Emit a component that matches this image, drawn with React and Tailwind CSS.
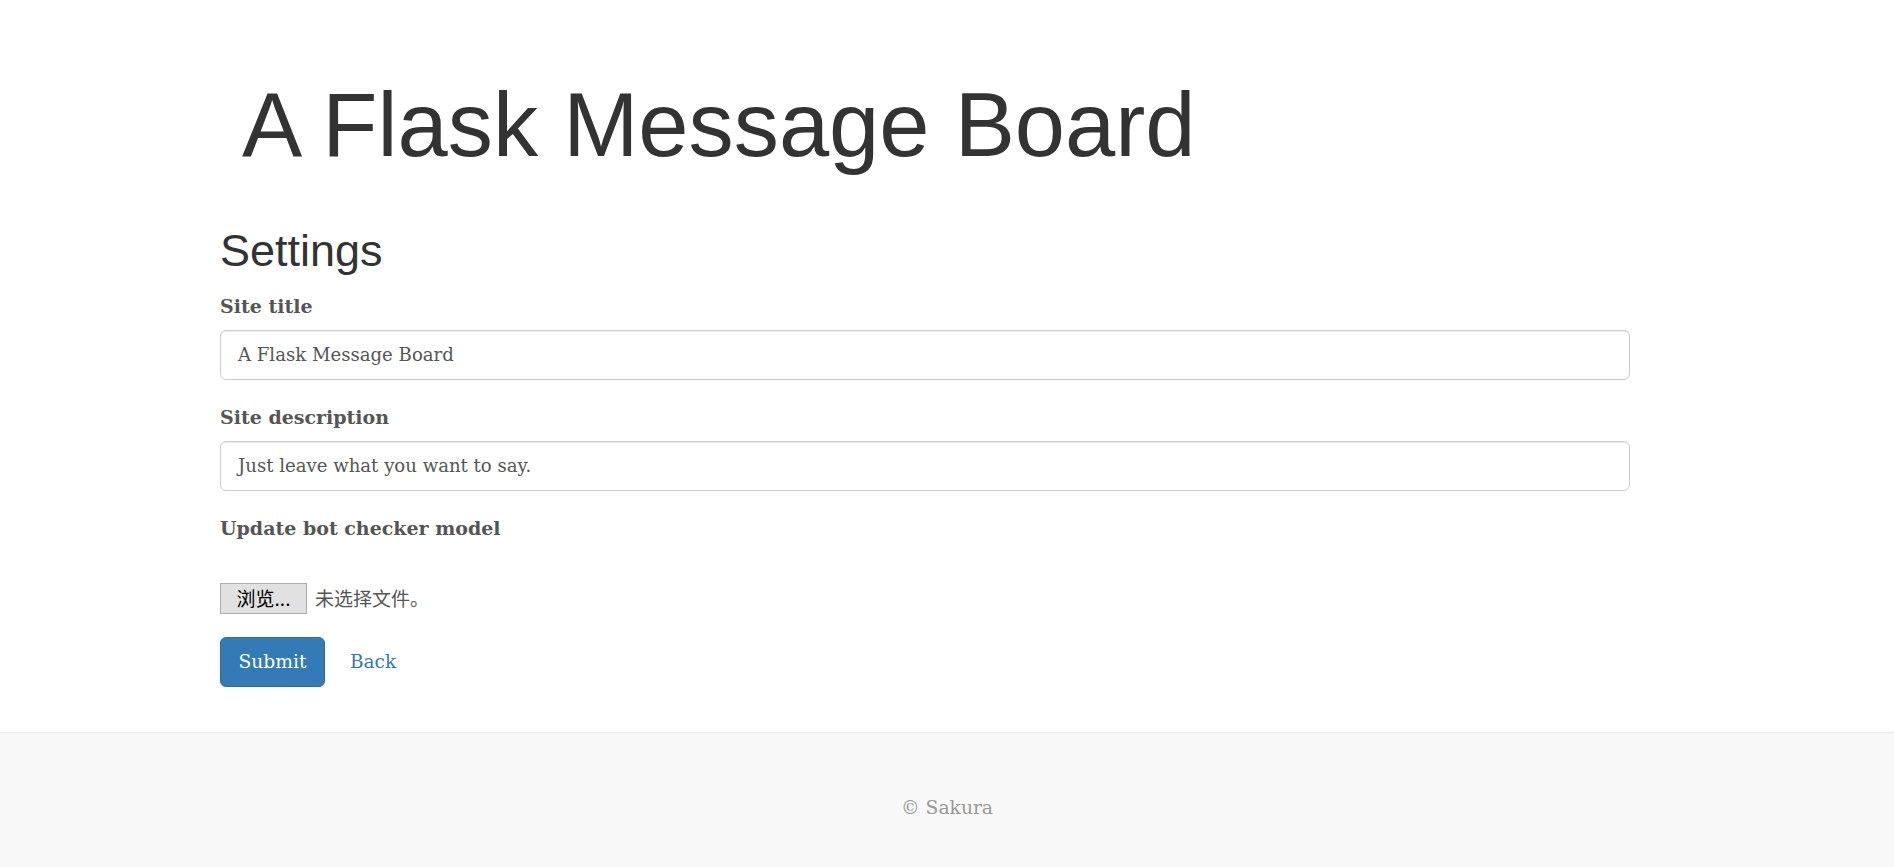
// Settings page for a small Flask message board

const serif = "font-['DejaVu_Serif',serif]"

function Field({ label, value }) {
  return (
    <div>
      <label className="block h-[26px] leading-[26px] font-bold text-[#555] text-[19px]">{label}</label>
      <div className="mt-[11px] h-[50px] flex items-center px-[17px] border border-[#ccc] rounded-[6px] bg-white shadow-[inset_0_1px_1px_rgba(0,0,0,0.075)] text-[#555] text-[18.1px]">
        {value}
      </div>
    </div>
  )
}

export default function App() {
  return (
    <div className={`min-h-screen bg-white ${serif}`}>
      <div className="pl-[220px] w-[1630px] pt-[75px] pb-[45px]">
        <h1 className="pl-[22px] h-[99px] leading-[99px] text-[90.3px] text-[#333] font-['Liberation_Sans',Arial,sans-serif]">
          A Flask Message Board
        </h1>

        <h2 className="mt-[53px] h-[48px] leading-[48px] text-[45px] text-[#333] font-['Liberation_Sans',Arial,sans-serif]">
          Settings
        </h2>

        <div className="mt-[18px]">
          <Field label="Site title" value="A Flask Message Board" />
        </div>
        <div className="mt-[24px]">
          <Field label="Site description" value="Just leave what you want to say." />
        </div>

        <div className="mt-[24px]">
          <label className="block h-[26px] leading-[26px] font-bold text-[#555] text-[19px]">Update bot checker model</label>
          <div className="mt-[42px] flex items-center h-[31px]">
            <span className="h-[31px] w-[87px] flex items-center justify-center bg-[#e1e1e1] border border-[#adadad] text-black text-[19px] font-['Noto_Sans_CJK_SC',sans-serif]">
              浏览...
            </span>
            <span className="ml-[8px] text-[#555] text-[19px] font-['Noto_Sans_CJK_SC',sans-serif]">未选择文件。</span>
          </div>
        </div>

        <div className="mt-[23px] flex items-center">
          <button className="h-[50px] w-[105px] bg-[#337ab7] border border-[#2e6da4] rounded-[6px] text-white text-[18.7px]">
            Submit
          </button>
          <a href="#" className="ml-[25px] text-[#337ab7] text-[18.5px]">Back</a>
        </div>
      </div>

      <footer className="border-t border-[#e7e7e7] bg-[#f8f8f8] pt-[62px] pb-[62px] text-center">
        <p className="h-[26px] leading-[26px] text-[#999] text-[18.7px]">© Sakura</p>
      </footer>
    </div>
  )
}
